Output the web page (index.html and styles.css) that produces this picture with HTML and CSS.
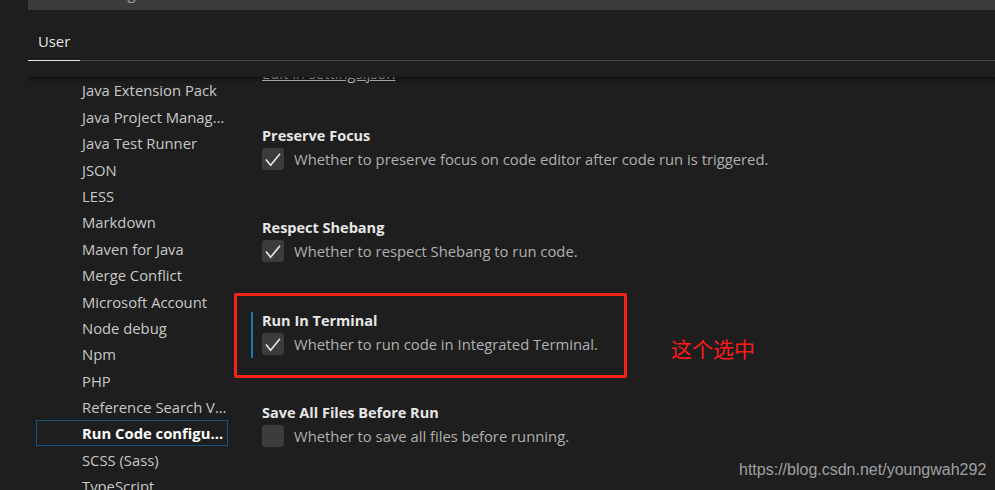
FILE: index.html
```html
<!DOCTYPE html>
<html lang="en">
<head>
<meta charset="utf-8">
<title>Settings</title>
<link rel="stylesheet" href="styles.css">
</head>
<body>
<div class="window">
  <div class="gutter"></div>
  <div class="editor">
    <div class="searchbar"><span class="placeholder">Search settings</span></div>
    <div class="tabs"><div class="tab active">User</div></div>
    <div class="spacer"></div>
    <div class="body">
      <nav class="toc">
        <div class="toc-row">Java Extension Pack</div>
        <div class="toc-row">Java Project Manager</div>
        <div class="toc-row">Java Test Runner</div>
        <div class="toc-row">JSON</div>
        <div class="toc-row">LESS</div>
        <div class="toc-row">Markdown</div>
        <div class="toc-row">Maven for Java</div>
        <div class="toc-row">Merge Conflict</div>
        <div class="toc-row">Microsoft Account</div>
        <div class="toc-row">Node debug</div>
        <div class="toc-row">Npm</div>
        <div class="toc-row">PHP</div>
        <div class="toc-row">Reference Search View</div>
        <div class="toc-row selected">Run Code configuration</div>
        <div class="toc-row">SCSS (Sass)</div>
        <div class="toc-row">TypeScript</div>
      </nav>
      <main class="settings">
        <div class="tail"><span class="link">Edit in settings.json</span></div>
        <div class="setting">
          <div class="item">
            <div class="title">Preserve Focus</div>
            <div class="row">
              <span class="checkbox"><svg viewBox="0 0 22 22"><polyline points="4,11.5 8.6,17.2 18,5.8"/></svg></span>
              <span class="desc">Whether to preserve focus on code editor after code run is triggered.</span>
            </div>
          </div>
        </div>
        <div class="setting">
          <div class="item">
            <div class="title">Respect Shebang</div>
            <div class="row">
              <span class="checkbox"><svg viewBox="0 0 22 22"><polyline points="4,11.5 8.6,17.2 18,5.8"/></svg></span>
              <span class="desc">Whether to respect Shebang to run code.</span>
            </div>
          </div>
        </div>
        <div class="setting">
          <div class="item focused">
            <div class="title">Run In Terminal</div>
            <div class="row">
              <span class="checkbox"><svg viewBox="0 0 22 22"><polyline points="4,11.5 8.6,17.2 18,5.8"/></svg></span>
              <span class="desc">Whether to run code in Integrated Terminal.</span>
            </div>
          </div>
        </div>
        <div class="setting">
          <div class="item">
            <div class="title">Save All Files Before Run</div>
            <div class="row">
              <span class="checkbox"></span>
              <span class="desc">Whether to save all files before running.</span>
            </div>
          </div>
        </div>
      </main>
    </div>
  </div>
  <div class="annot-box"></div>
  <div class="annot-text">这个选中</div>
  <div class="watermark">https://blog.csdn.net/youngwah292</div>
</div>
</body>
</html>
```
FILE: styles.css
```css
html, body {
  margin: 0;
  padding: 0;
  background: #1e1e1e;
}
.window {
  position: relative;
  width: 995px;
  height: 490px;
  overflow: hidden;
  display: flex;
  background: #1e1e1e;
  font-family: "Open Sans", "Noto Sans", sans-serif;
  font-size: 14.8px;
  color: #cccccc;
}
.gutter {
  width: 28px;
  flex: none;
  background: #1e1e1e;
}
.editor {
  flex: 1;
  display: flex;
  flex-direction: column;
  min-width: 0;
}
.searchbar {
  height: 10px;
  background: #3c3c3c;
  overflow: hidden;
  padding-left: 10px;
}
.placeholder {
  display: block;
  line-height: 20px;
  margin-top: -17px;
  color: #a0a0a0;
}
.tabs {
  height: 51px;
  box-sizing: border-box;
  border-bottom: 1px solid #474747;
  display: flex;
  align-items: flex-end;
}
.tab {
  padding: 0 10px 9px 10px;
  line-height: 20px;
  color: #e7e7e7;
  border-bottom: 1px solid #e7e7e7;
  margin-bottom: -1px;
}
.spacer {
  height: 16px;
}
.body {
  position: relative;
  flex: 1;
  display: flex;
  overflow: hidden;
}
.body::before {
  content: "";
  position: absolute;
  left: 0;
  right: 0;
  top: 0;
  height: 6px;
  box-shadow: inset 0 6px 6px -6px #000;
  z-index: 2;
}
.toc {
  width: 200px;
  flex: none;
  box-sizing: border-box;
  padding-left: 8px;
}
.toc-row {
  height: 26.4px;
  line-height: 24.4px;
  padding-top: 0.4px;
  box-sizing: border-box;
  border: 1px solid transparent;
  padding-left: 45px;
  padding-right: 0.5px;
  white-space: nowrap;
  overflow: hidden;
  text-overflow: ellipsis;
  color: #c8c8c8;
}
.toc-row.selected {
  border-color: #17507a;
  color: #ffffff;
  font-weight: 700;
}
.settings {
  flex: 1;
  padding-left: 23px;
  min-width: 0;
}
.tail {
  height: 50px;
  overflow: hidden;
  padding-left: 11px;
}
.link {
  display: block;
  margin-top: -14px;
  line-height: 20px;
  color: #bdbdbd;
  text-decoration: underline;
}
.setting {
  height: 92.4px;
}
.item {
  border-left: 2px solid transparent;
  padding: 0 0 3px 9px;
}
.item.focused {
  border-left-color: #1a7bb0;
}
.title {
  line-height: 17px;
  height: 17px;
  font-weight: 700;
  font-size: 14.5px;
  color: #e7e7e7;
}
.row {
  margin-top: 4px;
  display: flex;
  align-items: center;
  gap: 10px;
  height: 22px;
}
.checkbox {
  width: 22px;
  height: 22px;
  box-sizing: border-box;
  border-radius: 3px;
  background: #3c3c3c;
  flex: none;
  display: flex;
}
.checkbox svg {
  width: 22px;
  height: 22px;
  fill: none;
  stroke: #e8e8e8;
  stroke-width: 1.6;
}
.desc {
  color: #b0b0b0;
  white-space: nowrap;
}
.annot-box {
  position: absolute;
  left: 234px;
  top: 293px;
  width: 393px;
  height: 85px;
  box-sizing: border-box;
  border: 3px solid #f52318;
  border-radius: 2px;
}
.annot-text {
  position: absolute;
  left: 671px;
  top: 336px;
  line-height: 24px;
  font-family: "Noto Sans CJK SC", sans-serif;
  font-size: 21px;
  color: #ff1a1a;
}
.watermark {
  position: absolute;
  left: 739px;
  top: 460px;
  line-height: 20px;
  font-family: "Liberation Sans", Arial, sans-serif;
  font-size: 16px;
  color: #a0a0a0;
}
```
